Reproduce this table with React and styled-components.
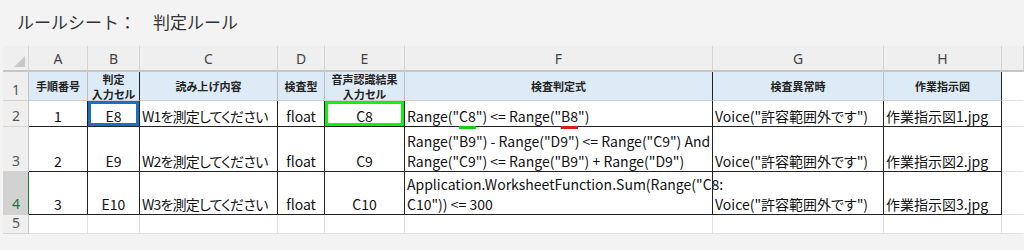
import styled, { createGlobalStyle } from 'styled-components';

const GlobalStyle = createGlobalStyle`
  body {
    margin: 0;
    background: #f3f3f3;
    font-family: "Noto Sans CJK JP", "Noto Sans", sans-serif;
    font-feature-settings: "palt";
  }
`;

const Page = styled.div`
  width: 1024px;
  height: 250px;
  overflow: hidden;
`;

const Title = styled.div`
  height: 46px;
  padding-left: 17px;
  font-size: 17px;
  line-height: 44px;
  color: #333;
  white-space: pre;
  font-feature-settings: normal;
`;

const Sheet = styled.div`
  display: grid;
  grid-template-columns: 26px 59px 52px 138px 47px 80px 308px 171px 118px 1fr;
  grid-template-rows: 26px 29px 26px 45px 43px 19px;
  margin-left: 3px;
  background: #fff;
  font-size: 14px;
  color: #111;
`;

const Corner = styled.div`
  position: relative;
  background: #efefef;
  border-right: 1px solid #d4d4d4;
  border-bottom: 2px solid #c6c6c6;

  &::after {
    content: '';
    position: absolute;
    right: 3px;
    bottom: 3px;
    border-left: 11px solid transparent;
    border-bottom: 11px solid #c8c8c8;
  }
`;

const ColHead = styled.div`
  background: #efefef;
  border-right: 1px solid #d4d4d4;
  border-bottom: 2px solid #c6c6c6;
  color: #444;
  font-family: "Noto Sans", sans-serif;
  font-size: 14px;
  display: flex;
  align-items: center;
  justify-content: center;
  padding-top: 1px;
`;

const RowHead = styled.div`
  background: ${(p) => (p.$active ? '#d2d2d2' : '#efefef')};
  border-right: 1px solid ${(p) => (p.$active ? '#217346' : '#c6c6c6')};
  border-bottom: 1px solid #d4d4d4;
  color: ${(p) => (p.$active ? '#217346' : '#555')};
  font-family: "Noto Sans", sans-serif;
  font-size: 14px;
  line-height: 20px;
  display: flex;
  align-items: flex-end;
  padding-left: 9px;
`;

const HeadCell = styled.div`
  background: #ddebf7;
  border-right: 1px solid ${(p) => (p.$dark ? '#222' : '#bcbcbc')};
  border-bottom: 1px solid #cfcfcf;
  font-size: 11px;
  font-weight: 700;
  line-height: 15px;
  color: #222;
  display: flex;
  flex-direction: column;
  align-items: center;
  justify-content: center;
  text-align: center;
  padding-top: 1px;
`;

const Cell = styled.div`
  border-right: 1px solid #222;
  border-bottom: 1px solid #222;
  line-height: 20px;
  display: flex;
  flex-direction: column;
  justify-content: flex-end;
  align-items: ${(p) => (p.$left ? 'flex-start' : 'center')};
  padding: 0 ${(p) => (p.$left ? '2px' : '0')};
  letter-spacing: ${(p) => (p.$tight ? '-0.8px' : 'normal')};
  white-space: nowrap;
  box-shadow: ${(p) => (p.$mark ? `inset 0 0 0 3px ${p.$mark}` : 'none')};
`;

const Blank = styled.div`
  border-right: 1px solid ${(p) => (p.$edge ? 'transparent' : '#e1e1e1')};
  border-bottom: 1px solid #e1e1e1;
`;

const Ref = styled.span`
  text-decoration: underline 3px ${(p) => p.$color};
  text-underline-offset: 4px;
`;

const heads = [
  { text: '手順番号' },
  { text: ['判定', '入力セル'], dark: true },
  { text: '読み上げ内容' },
  { text: '検査型' },
  { text: ['音声認識結果', '入力セル'] },
  { text: '検査判定式', dark: true },
  { text: '検査異常時' },
  { text: '作業指示図', dark: true },
];

const rows = [
  {
    no: '1',
    cell: 'E8',
    read: 'W1を測定してください',
    result: 'C8',
    formula: [
      <>
        Range("<Ref $color="#10d010">C8</Ref>") &lt;= Range("<Ref $color="#e01818">B8</Ref>")
      </>,
    ],
    pic: '作業指示図1.jpg',
  },
  {
    no: '2',
    cell: 'E9',
    read: 'W2を測定してください',
    result: 'C9',
    formula: [
      'Range("B9") - Range("D9") <= Range("C9") And',
      'Range("C9") <= Range("B9") + Range("D9")',
    ],
    pic: '作業指示図2.jpg',
  },
  {
    no: '3',
    cell: 'E10',
    read: 'W3を測定してください',
    result: 'C10',
    formula: ['Application.WorksheetFunction.Sum(Range("C8:', 'C10")) <= 300'],
    pic: '作業指示図3.jpg',
  },
];

const Lines = ({ items }) => items.map((t, i) => <div key={i}>{t}</div>);

export default function App() {
  return (
    <Page>
      <GlobalStyle />
      <Title>{'ルールシート：　判定ルール'}</Title>
      <Sheet>
        <Corner />
        {['A', 'B', 'C', 'D', 'E', 'F', 'G', 'H'].map((c) => (
          <ColHead key={c}>{c}</ColHead>
        ))}
        <ColHead />

        <RowHead>1</RowHead>
        {heads.map((h, i) => (
          <HeadCell key={i} $dark={h.dark}>
            {Array.isArray(h.text) ? <Lines items={h.text} /> : h.text}
          </HeadCell>
        ))}
        <Blank $edge />

        {rows.map((r, i) => (
          <Row key={r.no} r={r} index={i} />
        ))}

        <RowHead>5</RowHead>
        {Array.from({ length: 8 }).map((_, i) => (
          <Blank key={i} />
        ))}
        <Blank $edge />
      </Sheet>
    </Page>
  );
}

const Row = ({ r, index }) => (
  <>
    <RowHead $active={index === 2}>{index + 2}</RowHead>
    <Cell>{r.no}</Cell>
    <Cell $mark={index === 0 ? '#1a6fc4' : null}>{r.cell}</Cell>
    <Cell $left $tight>{r.read}</Cell>
    <Cell>float</Cell>
    <Cell $mark={index === 0 ? '#12f012' : null}>{r.result}</Cell>
    <Cell $left>
      <Lines items={r.formula} />
    </Cell>
    <Cell $left>Voice("許容範囲外です")</Cell>
    <Cell $left>{r.pic}</Cell>
    <Blank $edge />
  </>
);
